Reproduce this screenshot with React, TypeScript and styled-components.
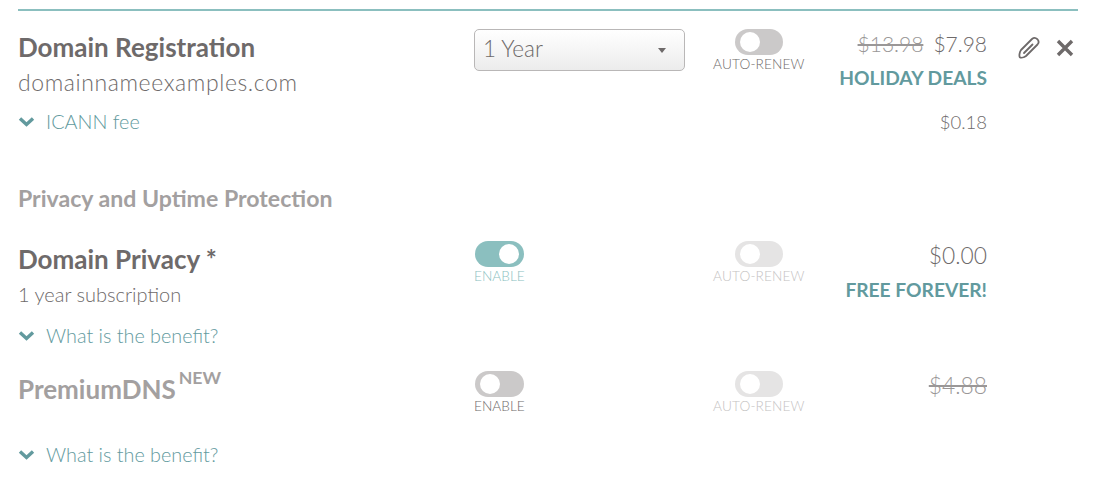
import React from 'react';
import styled, { createGlobalStyle } from 'styled-components';

const GlobalStyle = createGlobalStyle`
  html, body {
    margin: 0;
    background: #fff;
    font-family: Lato, "Open Sans", sans-serif;
    color: #6e6a6a;
  }
`;

const Page = styled.div`
  width: 1098px;
  height: 494px;
  padding: 9px 20px 0 18px;
  box-sizing: border-box;
  overflow: hidden;
`;

const Rule = styled.div`
  height: 2px;
  background: #8bbfbf;
`;

const Row = styled.div<{ $height: number }>`
  display: grid;
  grid-template-columns: 456px 239px 91px 183px 91px;
  height: ${(p) => p.$height}px;
`;

const NameCell = styled.div`
  display: flex;
  flex-direction: column;
  align-items: flex-start;
  padding-top: 3px;
`;

const Name = styled.div<{ $muted?: boolean }>`
  font-size: 26px;
  line-height: 30px;
  font-weight: 700;
  color: ${(p) => (p.$muted ? '#a3a0a0' : '#6e6a6a')};
`;

const NewTag = styled.sup`
  font-size: 17.7px;
  line-height: 0;
  font-weight: 700;
  margin-left: 3px;
  position: relative;
  top: -5px;
  vertical-align: super;
`;

const DomainText = styled.div`
  font-size: 23px;
  line-height: 26px;
  font-weight: 300;
  margin-top: 7px;
  letter-spacing: 0.6px;
`;

const Subscription = styled.div`
  font-size: 20px;
  line-height: 24px;
  font-weight: 300;
  margin-top: 8px;
`;

const Toggler = styled.div`
  display: flex;
  align-items: center;
  align-self: start;
  gap: 11px;
  font-size: 19.8px;
  line-height: 22px;
  font-weight: 300;
  color: #629a9e;
`;

const SelectBox = styled.div`
  width: 211px;
  height: 42px;
  box-sizing: border-box;
  display: flex;
  align-items: center;
  justify-content: space-between;
  padding: 0 18px 3px 8px;
  border: 1px solid #b9b7b7;
  border-radius: 5px;
  background: linear-gradient(#fff, #ececec);
  font-size: 22.5px;
  font-weight: 300;
  color: #6e6a6a;
`;

const Caret = styled.span`
  width: 0;
  height: 0;
  margin-top: 4px;
  border-left: 4.5px solid transparent;
  border-right: 4.5px solid transparent;
  border-top: 5px solid #6e6a6a;
`;

const SwitchWrap = styled.div<{ $color: string }>`
  display: flex;
  flex-direction: column;
  align-items: center;
  width: fit-content;
  color: ${(p) => p.$color};
`;

const Track = styled.span<{ $on?: boolean; $color: string; $wide?: boolean }>`
  display: flex;
  justify-content: ${(p) => (p.$on ? 'flex-end' : 'flex-start')};
  align-items: center;
  width: ${(p) => (p.$wide ? 49 : 48)}px;
  height: 26px;
  padding: 0 5px;
  box-sizing: border-box;
  border-radius: 13px;
  background: ${(p) => p.$color};
`;

const Knob = styled.span`
  width: 20px;
  height: 20px;
  border-radius: 50%;
  background: #fff;
`;

const SwitchLabel = styled.span<{ $wide?: boolean }>`
  font-size: 13.7px;
  line-height: 16px;
  font-weight: 300;
  margin-top: 1px;
  letter-spacing: ${(p) => (p.$wide ? 0 : 0.12)}px;
  white-space: nowrap;
`;

const PriceCell = styled.div`
  display: flex;
  flex-direction: column;
  align-items: flex-end;
`;

const PriceLine = styled.div<{ $large?: boolean }>`
  display: flex;
  gap: 10px;
  font-size: ${(p) => (p.$large ? 22.8 : 21)}px;
  line-height: ${(p) => (p.$large ? 28 : 30)}px;
  margin-bottom: ${(p) => (p.$large ? 2 : 0)}px;
  font-weight: 300;
  color: #6e6a6a;
`;

const OldPrice = styled.span`
  text-decoration: line-through;
  color: #9a9797;
`;

const Deal = styled.div`
  font-size: 19.2px;
  line-height: 24px;
  font-weight: 700;
  color: #629a9e;
  margin-top: 7px;
`;

const FeePrice = styled.div`
  font-size: 18.5px;
  line-height: 24px;
  font-weight: 300;
  text-align: right;
`;

const Actions = styled.div`
  display: flex;
  align-items: center;
  gap: 15px;
  height: 24px;
  margin: 7px 0 0 30px;
  color: #6e6a6a;
`;

const SectionHeading = styled.div`
  font-size: 23.1px;
  line-height: 28px;
  font-weight: 700;
  color: #a3a0a0;
`;

const Spacer = styled.div<{ $height: number }>`
  height: ${(p) => p.$height}px;
`;

const Chevron = () => (
  <svg width="17" height="11" viewBox="0 0 17 11" fill="none">
    <path d="M2 2.500l6.500 6L15 2.500" stroke="#629a9e" strokeWidth="3.4" />
  </svg>
);

const Paperclip = () => (
  <svg width="24" height="24" viewBox="0 0 24 24" fill="none" stroke="currentColor" strokeWidth="1.8" strokeLinecap="round" strokeLinejoin="round">
    <path d="M4 14L15 3a3.900 3.900 0 0 1 5.500 5.500L9 20c-2 1.500-5 2-6.200 1.200C2 20 2.500 16 4 14z" />
    <path d="M7 17l8.500-8.500" />
  </svg>
);

const Cross = () => (
  <svg width="18" height="18" viewBox="0 0 18 18" fill="none">
    <path d="M2 2l14 14M16 2L2 16" stroke="currentColor" strokeWidth="3.4" />
  </svg>
);

const Switch = ({ label, on, track, color, wide }: { label: string; on?: boolean; track: string; color: string; wide?: boolean }) => (
  <SwitchWrap $color={color}>
    <Track $on={on} $color={track} $wide={wide}>
      <Knob />
    </Track>
    <SwitchLabel $wide={wide}>{label}</SwitchLabel>
  </SwitchWrap>
);

export default function App() {
  return (
    <Page>
      <GlobalStyle />
      <Rule />
      <Spacer $height={18} />
      <Row $height={81}>
        <NameCell>
          <Name>Domain Registration</Name>
          <DomainText>domainnameexamples.com</DomainText>
        </NameCell>
        <div>
          <SelectBox>
            1 Year
            <Caret />
          </SelectBox>
        </div>
        <Switch label="AUTO-RENEW" track="#cbc9c9" color="#6e6a6a" />
        <PriceCell>
          <PriceLine>
            <OldPrice>$13.98</OldPrice>
            <span>$7.98</span>
          </PriceLine>
          <Deal>HOLIDAY DEALS</Deal>
        </PriceCell>
        <div>
          <Actions>
            <Paperclip />
            <Cross />
          </Actions>
        </div>
      </Row>
      <Row $height={74}>
        <Toggler>
          <Chevron />
          ICANN fee
        </Toggler>
        <div />
        <div />
        <FeePrice>$0.18</FeePrice>
      </Row>
      <SectionHeading>Privacy and Uptime Protection</SectionHeading>
      <Spacer $height={29} />
      <Row $height={83}>
        <NameCell>
          <Name>Domain Privacy *</Name>
          <Subscription>1 year subscription</Subscription>
        </NameCell>
        <Switch label="ENABLE" on track="#8bbfbf" color="#8bbfbf" wide />
        <Switch label="AUTO-RENEW" track="#e5e4e4" color="#c4c2c2" />
        <PriceCell>
          <PriceLine $large>$0.00</PriceLine>
          <Deal>FREE FOREVER!</Deal>
        </PriceCell>
      </Row>
      <Toggler>
        <Chevron />
        What is the benefit?
      </Toggler>
      <Spacer $height={25} />
      <Row $height={72}>
        <NameCell>
          <Name $muted>
            PremiumDNS<NewTag>NEW</NewTag>
          </Name>
        </NameCell>
        <Switch label="ENABLE" track="#cbc9c9" color="#6e6a6a" wide />
        <Switch label="AUTO-RENEW" track="#e5e4e4" color="#c4c2c2" />
        <PriceCell>
          <PriceLine $large>
            <OldPrice>$4.88</OldPrice>
          </PriceLine>
        </PriceCell>
      </Row>
      <Toggler>
        <Chevron />
        What is the benefit?
      </Toggler>
    </Page>
  );
}
